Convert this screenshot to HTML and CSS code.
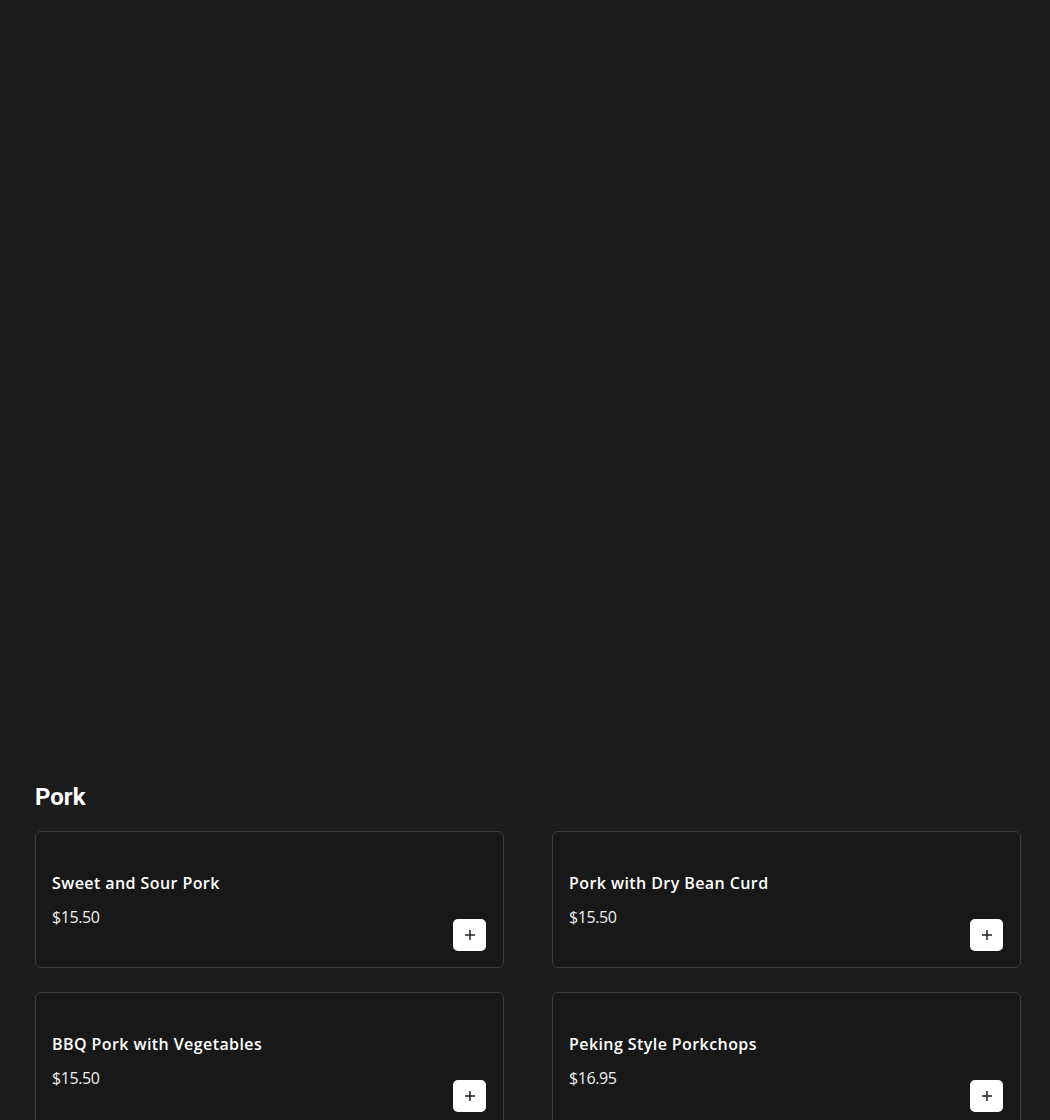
FILE: index.html
```html
<!DOCTYPE html>
<html lang="en">
<head>
<meta charset="utf-8">
<title>Menu</title>
<link rel="stylesheet" href="styles.css">
</head>
<body>
<main class="page">
  <div class="hero"></div>
  <section class="category">
    <h2 class="category-title">Pork</h2>
    <div class="grid">
      <article class="card">
        <div class="info">
          <h3 class="name">Sweet and Sour Pork</h3>
          <p class="price">$15.50</p>
        </div>
        <button class="add" aria-label="Add"><svg width="12" height="12" viewBox="0 0 12 12"><path d="M6 1v10M1 6h10" stroke="#222" stroke-width="1.5" fill="none"/></svg></button>
      </article>
      <article class="card">
        <div class="info">
          <h3 class="name">Pork with Dry Bean Curd</h3>
          <p class="price">$15.50</p>
        </div>
        <button class="add" aria-label="Add"><svg width="12" height="12" viewBox="0 0 12 12"><path d="M6 1v10M1 6h10" stroke="#222" stroke-width="1.5" fill="none"/></svg></button>
      </article>
      <article class="card">
        <div class="info">
          <h3 class="name">BBQ Pork with Vegetables</h3>
          <p class="price">$15.50</p>
        </div>
        <button class="add" aria-label="Add"><svg width="12" height="12" viewBox="0 0 12 12"><path d="M6 1v10M1 6h10" stroke="#222" stroke-width="1.5" fill="none"/></svg></button>
      </article>
      <article class="card">
        <div class="info">
          <h3 class="name">Peking Style Porkchops</h3>
          <p class="price">$16.95</p>
        </div>
        <button class="add" aria-label="Add"><svg width="12" height="12" viewBox="0 0 12 12"><path d="M6 1v10M1 6h10" stroke="#222" stroke-width="1.5" fill="none"/></svg></button>
      </article>
    </div>
  </section>
</main>
</body>
</html>
```

FILE: styles.css
```css
html, body {
  margin: 0;
  padding: 0;
  background: #1c1c1c;
}
body {
  font-family: "Open Sans", "Noto Sans", sans-serif;
  color: #fff;
}
.page {
  padding: 0 29px 0 35px;
}
.hero {
  height: 777px;
}
.category-title {
  margin: 0 0 13px;
  font-family: Roboto, Inter, sans-serif;
  font-weight: 700;
  font-size: 24px;
  line-height: 41px;
}
.grid {
  display: grid;
  grid-template-columns: 1fr 1fr;
  column-gap: 48px;
  row-gap: 24px;
}
.card {
  display: flex;
  justify-content: space-between;
  align-items: flex-end;
  background: #181818;
  border: 1px solid #3d3d3d;
  border-radius: 6px;
  padding: 39px 17px 16px 16px;
}
.info {
  padding-bottom: 22px;
}
.name {
  margin: 0 0 10px;
  font-size: 16px;
  font-weight: 600;
  line-height: 24px;
  letter-spacing: 0.42px;
}
.price {
  margin: 0;
  font-size: 16px;
  font-weight: 400;
  line-height: 24px;
  letter-spacing: -0.4px;
  color: #f0f0f0;
}
.add {
  display: flex;
  align-items: center;
  justify-content: center;
  width: 33px;
  height: 32px;
  padding: 0;
  border: 0;
  border-radius: 5px;
  background: #fff;
}
```
